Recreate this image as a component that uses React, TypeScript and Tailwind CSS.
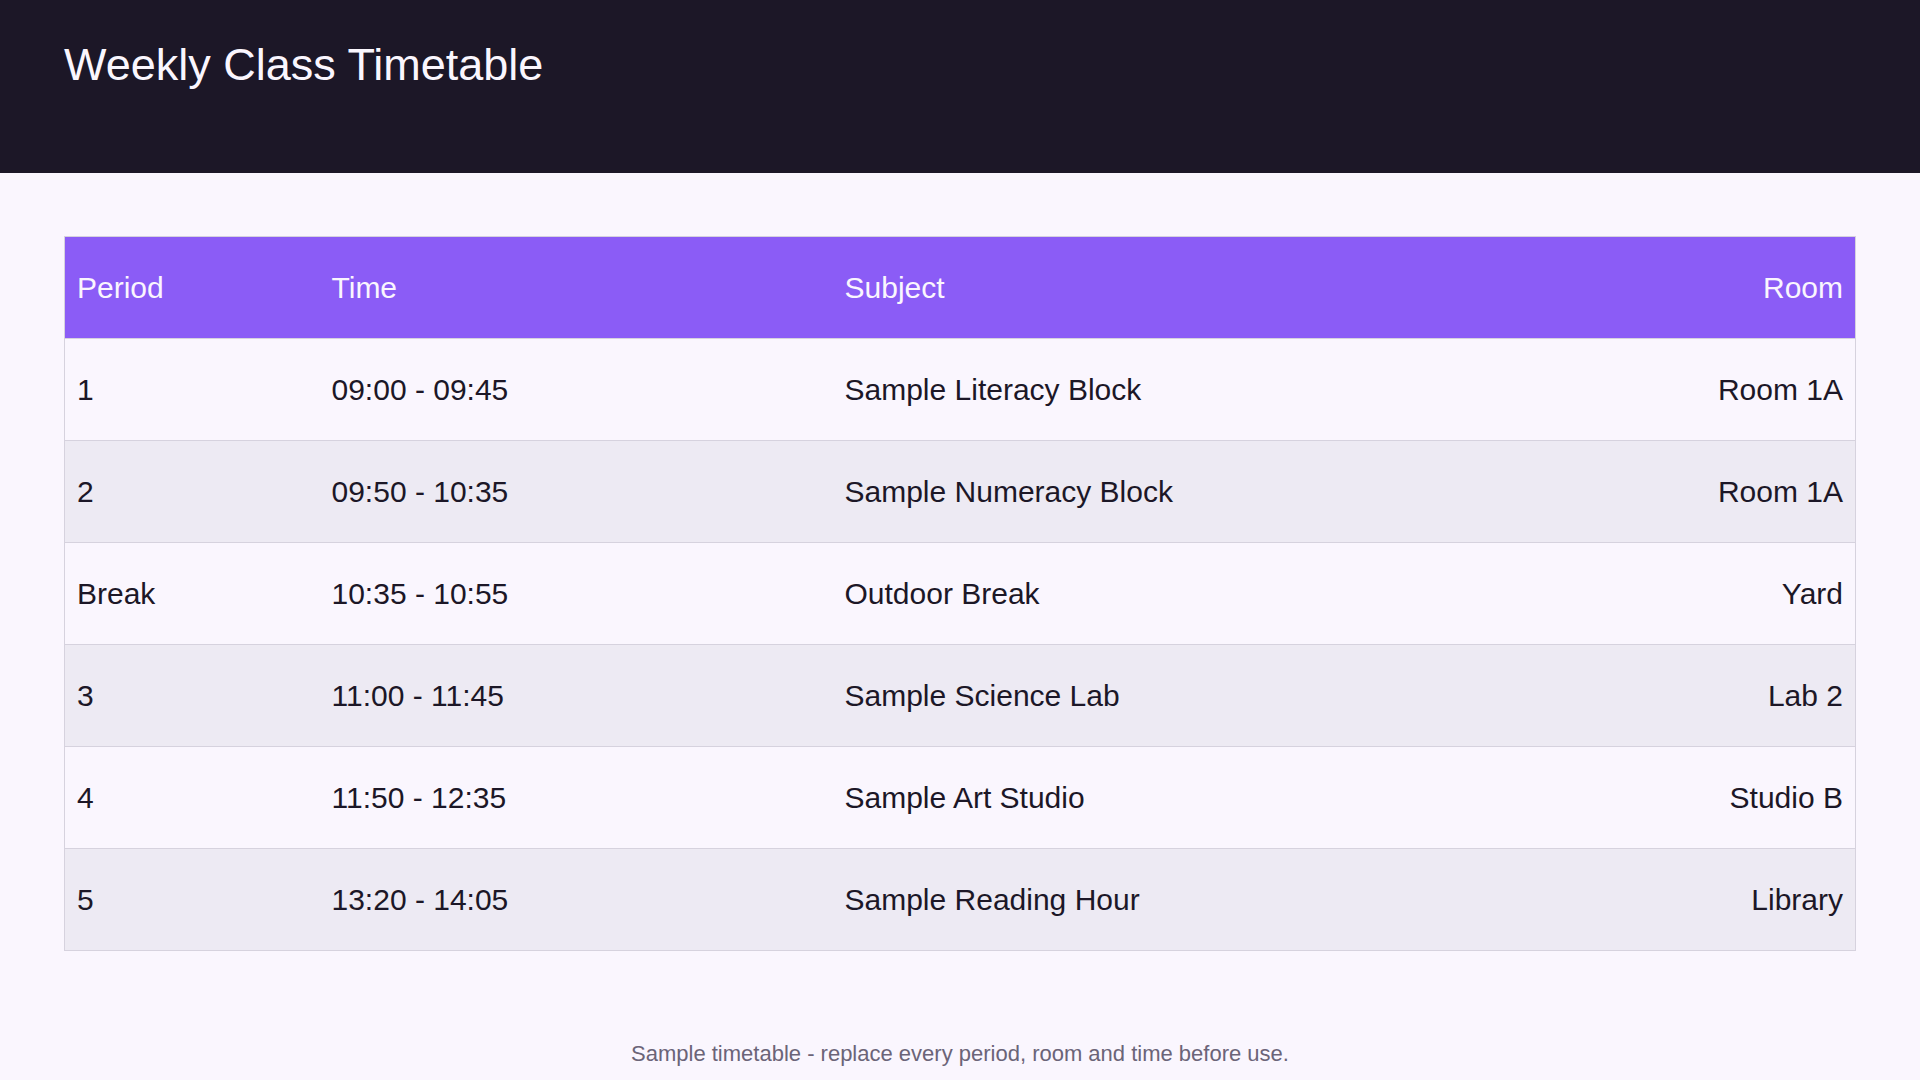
const rows = [
  { period: '1', time: '09:00 - 09:45', subject: 'Sample Literacy Block', room: 'Room 1A' },
  { period: '2', time: '09:50 - 10:35', subject: 'Sample Numeracy Block', room: 'Room 1A' },
  { period: 'Break', time: '10:35 - 10:55', subject: 'Outdoor Break', room: 'Yard' },
  { period: '3', time: '11:00 - 11:45', subject: 'Sample Science Lab', room: 'Lab 2' },
  { period: '4', time: '11:50 - 12:35', subject: 'Sample Art Studio', room: 'Studio B' },
  { period: '5', time: '13:20 - 14:05', subject: 'Sample Reading Hour', room: 'Library' },
];

export default function App() {
  return (
    <div className="min-h-screen bg-[#faf6fe] font-['Liberation_Sans',Arial,sans-serif] text-[#1c1727]">
      <header className="h-[173px] bg-[#1c1727] px-16 pt-[39px]">
        <h1 className="text-[45px] leading-[1.15] font-normal text-[#faf6fe]">Weekly Class Timetable</h1>
      </header>

      <main className="px-16 pt-[63px]">
        <table className="w-full table-fixed border-collapse border border-[#d6d2de] text-[30px]">
          <colgroup>
            <col className="w-[255px]" />
            <col className="w-[513px]" />
            <col />
            <col className="w-[300px]" />
          </colgroup>
          <thead>
            <tr className="h-[102px] bg-[#8b5cf6] text-[#faf6fe]">
              <th className="px-3 text-left font-normal">Period</th>
              <th className="px-3 text-left font-normal">Time</th>
              <th className="px-3 text-left font-normal">Subject</th>
              <th className="px-3 text-right font-normal">Room</th>
            </tr>
          </thead>
          <tbody>
            {rows.map((r, i) => (
              <tr
                key={r.period}
                className={`h-[102px] border-t border-[#d6d2de] ${i % 2 === 1 ? 'bg-[#edeaf3]' : 'bg-[#faf6fe]'}`}
              >
                <td className="px-3">{r.period}</td>
                <td className="px-3">{r.time}</td>
                <td className="px-3">{r.subject}</td>
                <td className="px-3 text-right">{r.room}</td>
              </tr>
            ))}
          </tbody>
        </table>

        <p className="mt-[86px] text-center text-[22px] text-[#6b6478]">
          Sample timetable - replace every period, room and time before use.
        </p>
      </main>
    </div>
  );
}
